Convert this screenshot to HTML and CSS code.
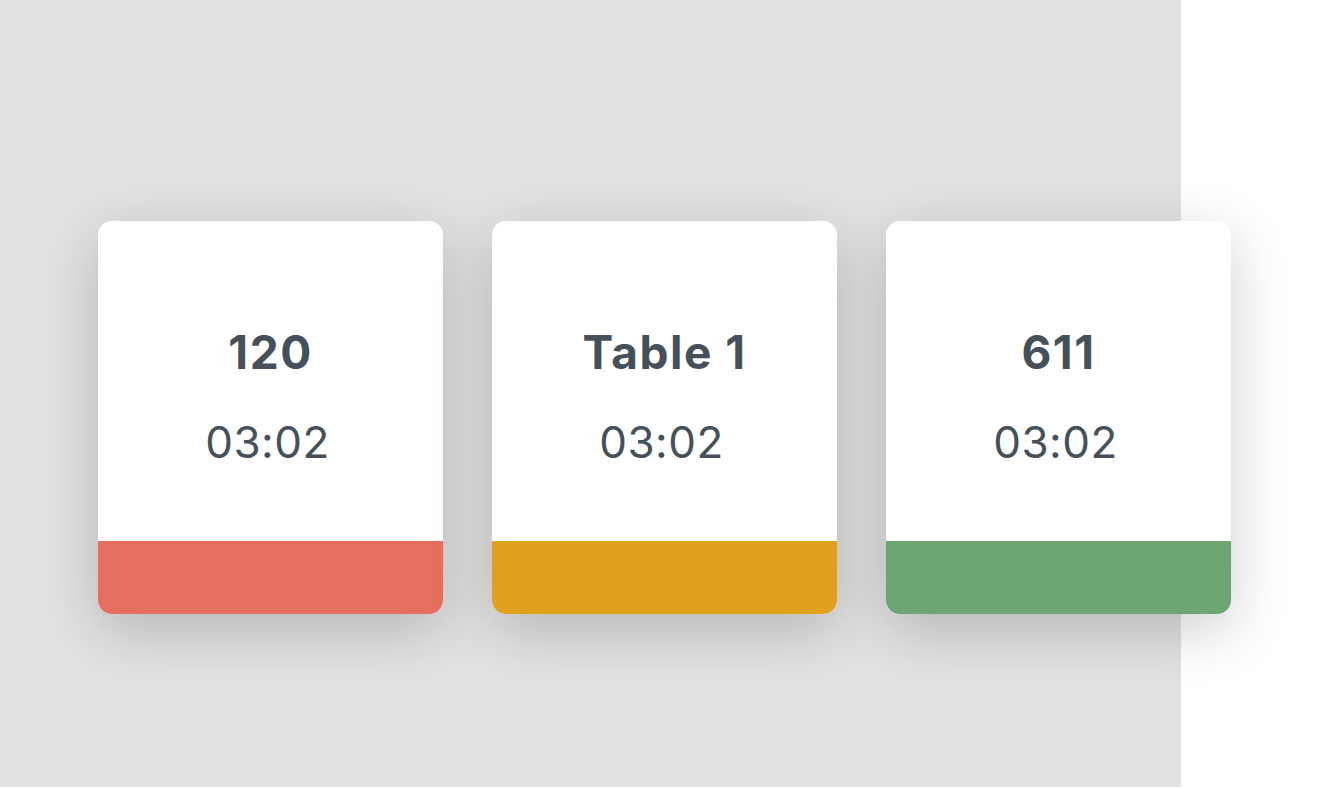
FILE: index.html
```html
<!DOCTYPE html>
<html lang="en">
<head>
    <meta charset="UTF-8">
    <meta name="viewport" content="width=device-width, initial-scale=1.0">
    <title>Table Timers</title>
    <link rel="stylesheet" href="styles.css">
</head>
<body>
    <div class="stage">
        <div class="tickets">
            <div class="ticket">
                <div class="ticket-body">
                    <h2 class="ticket-name">120</h2>
                    <p class="ticket-time">03:02</p>
                </div>
                <div class="ticket-bar late"></div>
            </div>
            <div class="ticket">
                <div class="ticket-body">
                    <h2 class="ticket-name">Table 1</h2>
                    <p class="ticket-time">03:02</p>
                </div>
                <div class="ticket-bar warn"></div>
            </div>
            <div class="ticket">
                <div class="ticket-body">
                    <h2 class="ticket-name">611</h2>
                    <p class="ticket-time">03:02</p>
                </div>
                <div class="ticket-bar ok"></div>
            </div>
        </div>
    </div>
</body>
</html>
```

FILE: styles.css
```css
body {
    margin: 0;
    padding: 0;
    background-color: #ffffff;
    font-family: Inter, "Noto Sans", sans-serif;
}
.stage {
    width: 1181px;
    height: 787px;
    background-color: #e2e2e2;
    box-sizing: border-box;
    padding: 221px 0 0 98px;
}
.tickets {
    display: flex;
    gap: 49px;
}
.ticket {
    flex: none;
    width: 345px;
    height: 393px;
    display: flex;
    flex-direction: column;
    background-color: #ffffff;
    border-radius: 14px;
    overflow: hidden;
    box-shadow: 0 16px 60px rgba(0, 0, 0, 0.2);
}
.ticket-body {
    flex: 1;
    display: flex;
    flex-direction: column;
    align-items: center;
    padding-top: 104px;
    color: #45505a;
}
.ticket-name {
    margin: 0;
    font-size: 46px;
    font-weight: 700;
    line-height: 54px;
    letter-spacing: 1.5px;
}
.ticket-time {
    margin: 36px 0 0 -6px;
    font-size: 44px;
    font-weight: 400;
    line-height: 54px;
    letter-spacing: 0.5px;
}
.ticket-bar {
    height: 73px;
}
.late {
    background-color: #e66e5e;
}
.warn {
    background-color: #e0a21d;
}
.ok {
    background-color: #6ca673;
}
```
